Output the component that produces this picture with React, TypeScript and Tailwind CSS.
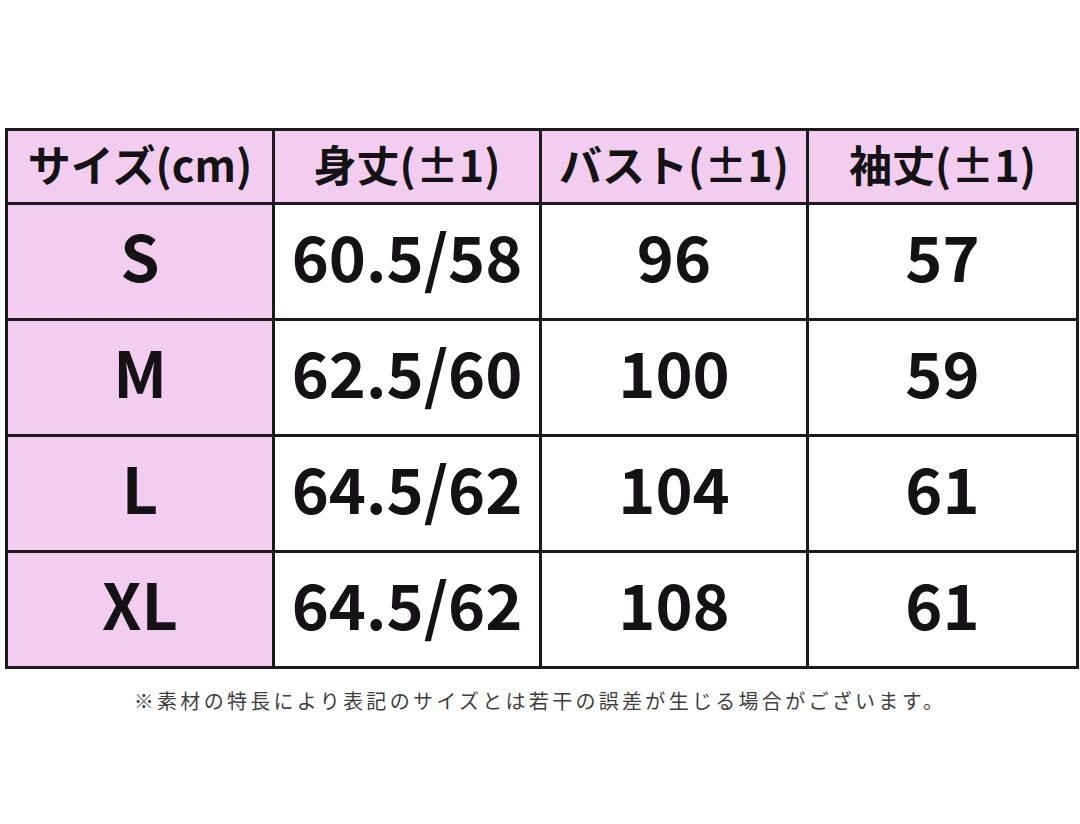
const headers = ['サイズ(cm)', '身丈(±1)', 'バスト(±1)', '袖丈(±1)']

const rows = [
  { size: 'S', length: '60.5/58', bust: '96', sleeve: '57' },
  { size: 'M', length: '62.5/60', bust: '100', sleeve: '59' },
  { size: 'L', length: '64.5/62', bust: '104', sleeve: '61' },
  { size: 'XL', length: '64.5/62', bust: '108', sleeve: '61' },
]

const cell = 'border-[3px] border-[#1c1a1c] text-center align-middle p-0'
const num = `${cell} text-[63px] font-bold leading-none pb-[14px]`

export default function App() {
  return (
    <div
      className="w-[1080px] h-[824px] bg-white pt-[128px] px-[5px]"
      style={{ fontFamily: '"Noto Sans CJK JP", "Noto Sans", sans-serif' }}
    >
      <table className="w-[1071px] table-fixed border-collapse text-[#141214]">
        <colgroup>
          <col className="w-[267px]" />
          <col className="w-[267px]" />
          <col className="w-[267px]" />
          <col className="w-[270px]" />
        </colgroup>
        <thead>
          <tr className="h-[74px] bg-[#f2cdef]">
            {headers.map((h) => (
              <th key={h} className={`${cell} text-[43px] font-bold leading-none pb-[6px]`}>
                {h}
              </th>
            ))}
          </tr>
        </thead>
        <tbody>
          {rows.map((r) => (
            <tr key={r.size} className="h-[116px]">
              <td className={`${num} bg-[#f2cdef]`}>{r.size}</td>
              <td className={num}>{r.length}</td>
              <td className={num}>{r.bust}</td>
              <td className={num}>{r.sleeve}</td>
            </tr>
          ))}
        </tbody>
      </table>
      <p className="mt-[17px] text-center text-[20px] tracking-[3.3px] text-[#3f3f3f]">
        ※素材の特長により表記のサイズとは若干の誤差が生じる場合がございます。
      </p>
    </div>
  )
}
